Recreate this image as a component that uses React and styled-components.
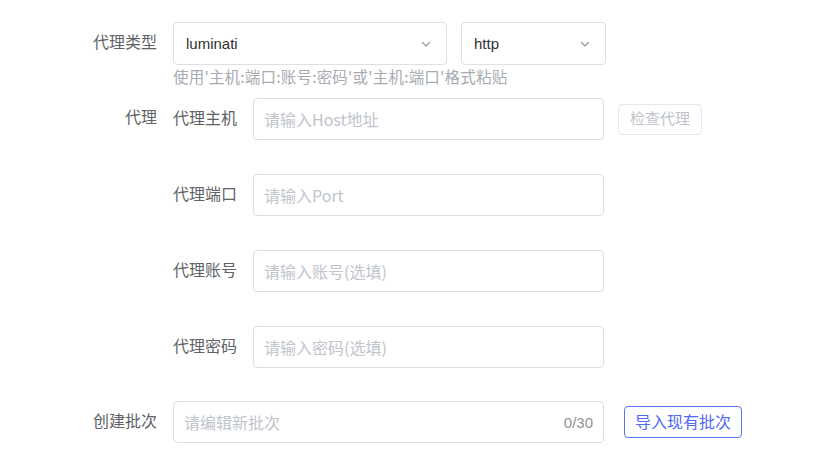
import styled, { createGlobalStyle } from "styled-components";

const GlobalStyle = createGlobalStyle`
  body {
    margin: 0;
    background: #ffffff;
    font-family: "Noto Sans CJK SC", "Noto Sans", "Liberation Sans", sans-serif;
    font-size: 16px;
  }
`;

const Form = styled.div`
  padding-top: 22px;
  width: 831px;
`;

const Row = styled.div`
  display: flex;
  align-items: ${(props) => (props.top ? "flex-start" : "center")};
  margin-bottom: ${(props) => props.mb || 0}px;
`;

const Label = styled.div`
  padding: 0 16px 5px 0;
  box-sizing: border-box;
  width: 173px;
  text-align: right;
  color: #606266;
  line-height: ${(props) => props.lh || 20}px;
  flex-shrink: 0;
`;

const SelectBox = styled.div`
  width: ${(props) => props.w}px;
  height: 43px;
  box-sizing: border-box;
  border: 1px solid #dcdfe6;
  border-radius: 4px;
  display: flex;
  align-items: center;
  justify-content: space-between;
  padding: 0 14px 0 12px;
  color: #303133;
  font-family: "Liberation Sans", "Noto Sans CJK SC", sans-serif;
  font-size: 15px;
  margin-right: ${(props) => props.mr || 0}px;
`;

const Hint = styled.div`
  margin: 1px 0 12px 173px;
  color: #a8abb2;
  font-size: 15.5px;
  letter-spacing: 0.2px;
  line-height: 20px;
`;

const Group = styled.div`
  display: flex;
  flex-direction: column;
`;

const SubLabel = styled.div`
  width: 80px;
  padding-bottom: 5px;
  color: #606266;
  flex-shrink: 0;
`;

const Input = styled.div`
  width: ${(props) => props.w}px;
  height: ${(props) => props.h || 42}px;
  box-sizing: border-box;
  border: 1px solid #dcdfe6;
  border-radius: 4px;
  display: flex;
  align-items: center;
  justify-content: space-between;
  padding: 0 10px;
  color: #c0c4cc;
`;

const Counter = styled.span`
  color: #909399;
  font-family: "Liberation Sans", sans-serif;
  font-size: 15px;
`;

const Button = styled.button`
  margin-left: ${(props) => props.ml}px;
  height: ${(props) => props.h}px;
  padding: 0 ${(props) => props.px}px 3px;
  background: #ffffff;
  border: 1px solid ${(props) => (props.primary ? "#5a74f3" : "#e4e7ed")};
  color: ${(props) => (props.primary ? "#4f6bf0" : "#c0c4cc")};
  border-radius: 4px;
  font-family: inherit;
  font-size: ${(props) => (props.primary ? 16 : 15)}px;
  cursor: ${(props) => (props.primary ? "pointer" : "not-allowed")};
`;

const Chevron = () => (
  <svg width="12" height="12" viewBox="0 0 12 12" fill="none">
    <path d="M2.5 4.5 L6 8 L9.5 4.5" stroke="#909399" strokeWidth="1.1" strokeLinecap="round" strokeLinejoin="round" />
  </svg>
);

const proxyFields = [
  { label: "代理主机", placeholder: "请输入Host地址", check: true },
  { label: "代理端口", placeholder: "请输入Port" },
  { label: "代理账号", placeholder: "请输入账号(选填)" },
  { label: "代理密码", placeholder: "请输入密码(选填)" },
];

const App = () => {
  return (
    <>
      <GlobalStyle />
      <Form>
        <Row>
          <Label>代理类型</Label>
          <SelectBox w={274} mr={14}>
            <span>luminati</span>
            <Chevron />
          </SelectBox>
          <SelectBox w={145}>
            <span>http</span>
            <Chevron />
          </SelectBox>
        </Row>
        <Hint>使用'主机:端口:账号:密码'或'主机:端口'格式粘贴</Hint>
        <Row top mb={33}>
          <Label lh={37}>代理</Label>
          <Group>
            {proxyFields.map((f, i) => (
              <Row key={f.label} mb={i < proxyFields.length - 1 ? 34 : 0}>
                <SubLabel>{f.label}</SubLabel>
                <Input w={351}>{f.placeholder}</Input>
                {f.check && (
                  <Button ml={14} h={31} px={11}>
                    检查代理
                  </Button>
                )}
              </Row>
            ))}
          </Group>
        </Row>
        <Row>
          <Label>创建批次</Label>
          <Input w={431} h={42}>
            <span>请编辑新批次</span>
            <Counter>0/30</Counter>
          </Input>
          <Button primary ml={20} h={32} px={10}>
            导入现有批次
          </Button>
        </Row>
      </Form>
    </>
  );
};

export default App;
